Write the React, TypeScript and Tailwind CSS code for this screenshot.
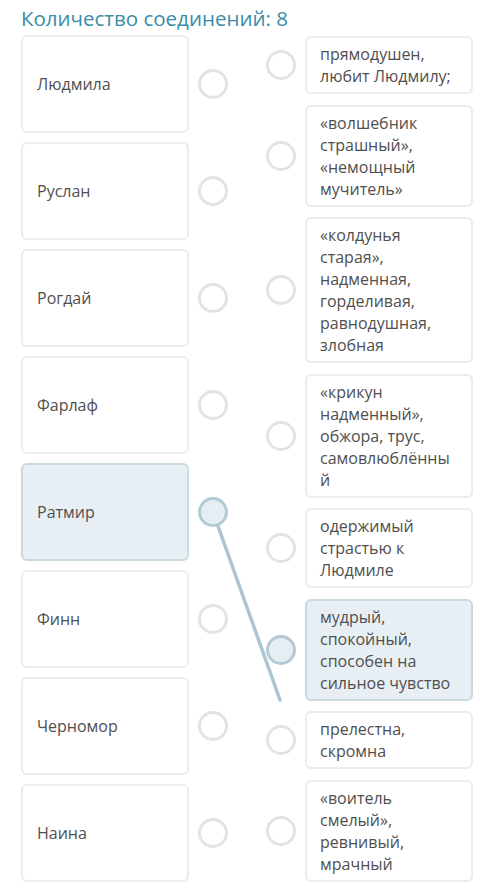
import React from "react";

const names = [
  "Людмила",
  "Руслан",
  "Рогдай",
  "Фарлаф",
  "Ратмир",
  "Финн",
  "Черномор",
  "Наина",
];

const traits = [
  "прямодушен, любит Людмилу;",
  "«волшебник страшный», «немощный мучитель»",
  "«колдунья старая», надменная, горделивая, равнодушная, злобная",
  "«крикун надменный», обжора, трус, самовлюблённый",
  "одержимый страстью к Людмиле",
  "мудрый, спокойный, способен на сильное чувство",
  "прелестна, скромна",
  "«воитель смелый», ревнивый, мрачный",
];

const activeLeft = 4;
const activeRight = 5;

function Dot({ active }: { active?: boolean }) {
  return (
    <div
      className={`relative w-[30px] h-[30px] shrink-0 rounded-full border-[3px] ${
        active ? "bg-[#e6eef3] border-[#b3cad5]" : "bg-white border-[#e3e3e3]"
      }`}
    />
  );
}

export default function App() {
  return (
    <div
      className="relative w-[500px] h-[889px] overflow-hidden bg-white text-[#4f4f4f]"
      style={{ fontFamily: '"Open Sans", "Noto Sans", sans-serif' }}
    >
      {/* drag line between Ратмир and the answer being dragged */}
      <svg className="absolute inset-0 w-full h-full pointer-events-none" viewBox="0 0 500 889">
        <line x1="213" y1="512" x2="280" y2="700" stroke="#abc6d2" strokeWidth="3.5" strokeLinecap="round" />
      </svg>

      <h1 className="relative pl-[21px] pt-[5px] text-[20.5px] leading-[27px] text-[#3a8ca6]">
        Количество соединений: 8
      </h1>

      <div className="flex pl-[21px] pt-[3px] gap-[38px]">
        <div className="flex flex-col gap-[9px]">
          {names.map((n, i) => (
            <div key={n} className="flex items-center gap-[9px]">
              <div
                className={`w-[168px] h-[98px] flex items-center px-[14px] rounded-[6px] border-2 text-[16px] ${
                  i === activeLeft ? "bg-[#e8eff4] border-[#cad8e0]" : "bg-white border-[#ececec]"
                }`}
              >
                {n}
              </div>
              <Dot active={i === activeLeft} />
            </div>
          ))}
        </div>

        <div className="flex flex-col gap-[10.5px] pt-[1px]">
          {traits.map((t, i) => (
            <div key={t} className="flex items-center gap-[9px]">
              <Dot active={i === activeRight} />
              <div
                className={`w-[168px] px-[13px] py-[5px] rounded-[6px] border-2 text-[16px] leading-[22px] break-words ${
                  i === activeRight ? "bg-[#e8eff4] border-[#cad8e0]" : "bg-white border-[#ececec]"
                }`}
              >
                {t}
              </div>
            </div>
          ))}
        </div>
      </div>
    </div>
  );
}
